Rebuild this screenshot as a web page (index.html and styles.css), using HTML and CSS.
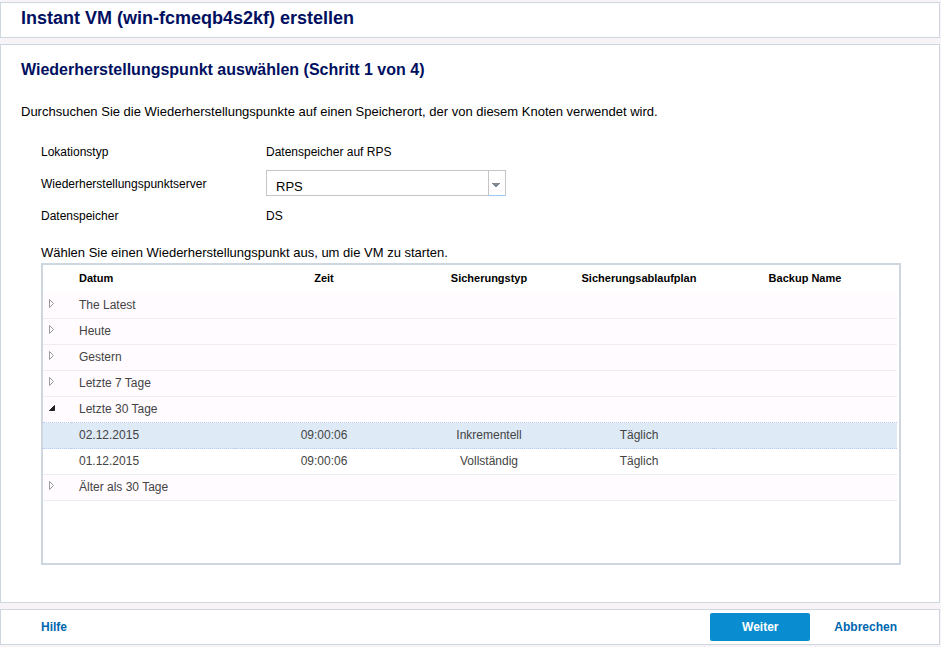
FILE: index.html
```html
<!DOCTYPE html>
<html lang="de">
<head>
    <meta charset="UTF-8">
    <meta name="viewport" content="width=device-width, initial-scale=1">
    <title>Instant VM erstellen</title>
    <link rel="stylesheet" href="styles.css">
</head>
<body>
    <header class="panel header">
        <h1>Instant VM (win-fcmeqb4s2kf) erstellen</h1>
    </header>

    <main class="panel content">
        <h2>Wiederherstellungspunkt auswählen (Schritt 1 von 4)</h2>
        <p class="intro">Durchsuchen Sie die Wiederherstellungspunkte auf einen Speicherort, der von diesem Knoten verwendet wird.</p>

        <div class="form">
            <span>Lokationstyp</span>
            <span>Datenspeicher auf RPS</span>
            <label for="server">Wiederherstellungspunktserver</label>
            <div class="combo">
                <select id="server">
                    <option>RPS</option>
                </select>
                <span class="combo-trigger">
                    <svg width="8" height="4" viewBox="0 0 8 4"><path d="M0 0h8v1H7v1H6v1H5v1H3V3H2V2H1V1H0z" fill="#7f8790"/></svg>
                </span>
            </div>
            <span>Datenspeicher</span>
            <span>DS</span>
        </div>

        <p class="hint" id="grid_label">Wählen Sie einen Wiederherstellungspunkt aus, um die VM zu starten.</p>
        <div class="grid">
            <table aria-labelledby="grid_label">
                <colgroup>
                    <col class="col-toggle">
                    <col class="col-date">
                    <col class="col-time">
                    <col class="col-type">
                    <col class="col-plan">
                    <col>
                </colgroup>
                <thead>
                    <tr>
                        <td></td>
                        <th class="date">Datum</th>
                        <th>Zeit</th>
                        <th>Sicherungstyp</th>
                        <th>Sicherungsablaufplan</th>
                        <th>Backup Name</th>
                    </tr>
                </thead>
                <tbody>
                    <tr class="group">
                        <td><button class="toggle" aria-label="Aufklappen"><svg width="7" height="9" viewBox="0 0 7 9"><path d="M1.500 .5v8l4-4z"/></svg></button></td>
                        <td colspan="5">The Latest</td>
                    </tr>
                    <tr class="group">
                        <td><button class="toggle" aria-label="Aufklappen"><svg width="7" height="9" viewBox="0 0 7 9"><path d="M1.500 .5v8l4-4z"/></svg></button></td>
                        <td colspan="5">Heute</td>
                    </tr>
                    <tr class="group">
                        <td><button class="toggle" aria-label="Aufklappen"><svg width="7" height="9" viewBox="0 0 7 9"><path d="M1.500 .5v8l4-4z"/></svg></button></td>
                        <td colspan="5">Gestern</td>
                    </tr>
                    <tr class="group">
                        <td><button class="toggle" aria-label="Aufklappen"><svg width="7" height="9" viewBox="0 0 7 9"><path d="M1.500 .5v8l4-4z"/></svg></button></td>
                        <td colspan="5">Letzte 7 Tage</td>
                    </tr>
                    <tr class="group open">
                        <td><button class="toggle" aria-label="Zuklappen"><svg width="7" height="9" viewBox="0 0 7 9"><path d="M6.500 2.500v5h-5z"/></svg></button></td>
                        <td colspan="5">Letzte 30 Tage</td>
                    </tr>
                    <tr class="selected">
                        <td></td>
                        <td class="date">02.12.2015</td>
                        <td>09:00:06</td>
                        <td>Inkrementell</td>
                        <td>Täglich</td>
                        <td></td>
                    </tr>
                    <tr>
                        <td></td>
                        <td class="date">01.12.2015</td>
                        <td>09:00:06</td>
                        <td>Vollständig</td>
                        <td>Täglich</td>
                        <td></td>
                    </tr>
                    <tr class="group">
                        <td><button class="toggle" aria-label="Aufklappen"><svg width="7" height="9" viewBox="0 0 7 9"><path d="M1.500 .5v8l4-4z"/></svg></button></td>
                        <td colspan="5">Älter als 30 Tage</td>
                    </tr>
                </tbody>
            </table>
        </div>
    </main>

    <footer class="panel footer">
        <a href="#">Hilfe</a>
        <div class="actions">
            <button class="primary">Weiter</button>
            <a href="#">Abbrechen</a>
        </div>
    </footer>
</body>
</html>
```
FILE: styles.css
```css
* {
    box-sizing: border-box;
}

body {
    display: flex;
    flex-direction: column;
    gap: 6px;
    min-height: 100vh;
    margin: 0;
    padding: 2px 1px 2px 0;
    background: #f7f3f7;
    color: #000;
    font: 12px/16px "Liberation Sans", Arial, sans-serif;
}

h1, h2, p {
    margin: 0;
}

h1, h2 {
    color: #000f60;
    line-height: 20px;
}

h1 {
    font-size: 18px;
}

h2 {
    font-size: 16px;
}

.panel {
    background: #fff;
    border: 1px solid #ced7df;
}

.header {
    padding: 5px 20px 9px;
}

.content {
    display: flex;
    flex: 1;
    flex-direction: column;
    padding: 15px 38px 37px 40px;
}

.content h2,
.intro {
    margin-left: -20px;
}

.intro {
    margin-top: 24px;
    font-size: 13px;
}

.form {
    display: grid;
    grid-template-columns: 225px 1fr;
    grid-auto-rows: 26px;
    row-gap: 6px;
    align-items: center;
    margin-top: 18px;
}

.form > span,
.form > label {
    padding-top: 2px;
}

.combo {
    position: relative;
    width: 240px;
    height: 26px;
}

.combo select {
    width: 100%;
    height: 26px;
    padding: 8px 26px 0 9px;
    appearance: none;
    background: #fff;
    border: 1px solid #c5c5c5;
    border-radius: 0;
    color: #000;
    font: 13px/16px "Liberation Sans", Arial, sans-serif;
}

.combo-trigger {
    position: absolute;
    top: 0;
    right: 0;
    display: flex;
    align-items: center;
    justify-content: center;
    width: 18px;
    height: 26px;
    padding: 4px 2px 0 0;
    border: 1px solid #c5c5c5;
    border-bottom-color: #a3c8ee;
    pointer-events: none;
}

.hint {
    margin-top: 17px;
    font-size: 13px;
}

.grid {
    flex: 1;
    margin-top: 2px;
    padding-right: 2px;
    border: 2px solid #ced7df;
}

table {
    width: 100%;
    table-layout: fixed;
    border-collapse: separate;
    border-spacing: 0;
    color: #444;
}

.col-toggle {
    width: 28px;
}

.col-date {
    width: 164px;
}

.col-time {
    width: 178px;
}

.col-type {
    width: 152px;
}

.col-plan {
    width: 148px;
}

th, td {
    padding: 0;
    text-align: center;
}

th {
    height: 28px;
    padding-bottom: 2px;
    color: #000;
    font-size: 11px;
}

tbody td {
    height: 26px;
    padding-bottom: 2px;
    border-bottom: 1px solid #ededed;
}

.date,
.group td {
    padding-left: 8px;
    text-align: left;
}

.group td {
    background: #fffbff;
}

.group td:first-child {
    padding: 0 0 4px 5px;
}

.selected td {
    background: #deeaf6;
    border-bottom: 1px dotted #b9cdf0;
}

.open td {
    border-bottom: 1px dotted #b9cdf0;
}

.toggle {
    display: block;
    padding: 0;
    background: none;
    border: 0;
}

.toggle svg {
    display: block;
    fill: #fff;
    stroke: #9a9a9a;
}

.open .toggle svg {
    fill: #222;
    stroke: #222;
}

.footer {
    display: flex;
    align-items: center;
    justify-content: space-between;
    padding: 3px 42px 3px 40px;
}

.footer a {
    color: #0066b0;
    font-weight: bold;
    text-decoration: none;
}

.actions {
    display: flex;
    align-items: center;
    gap: 24px;
}

.primary {
    width: 100px;
    height: 28px;
    padding: 0;
    background: #0a8dd0;
    border: 0;
    border-radius: 2px;
    color: #fff;
    font: bold 12px/16px "Liberation Sans", Arial, sans-serif;
}
```
